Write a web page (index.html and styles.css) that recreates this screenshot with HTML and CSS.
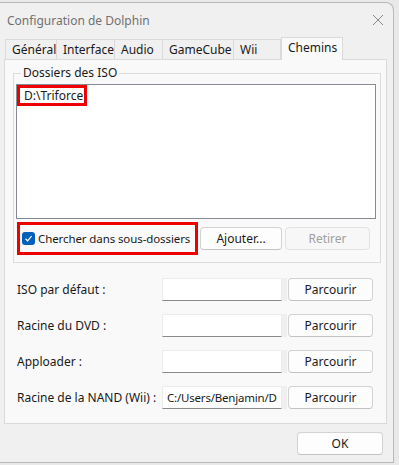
FILE: index.html
```html
<!DOCTYPE html>
<html>
<head>
<title>Configuration de Dolphin</title>
<meta charset="utf-8">
<link rel="stylesheet" href="styles.css">
</head>
<body>
<div class="window">
	<div class="titlebar">
		<span class="title">Configuration de Dolphin</span>
		<svg class="close" width="12" height="12" viewBox="0 0 12 12"><path d="M1 1L11 11M11 1L1 11" stroke="#8a8a8a" stroke-width="1"/></svg>
	</div>
	<div class="tabs">
		<div class="tab t1">Général</div>
		<div class="tab t2">Interface</div>
		<div class="tab t3">Audio</div>
		<div class="tab t4">GameCube</div>
		<div class="tab t5">Wii</div>
		<div class="tab active">Chemins</div>
	</div>
	<div class="panel">
		<fieldset class="group">
			<legend>Dossiers des ISO</legend>
			<div class="listbox">
				<span class="item mark">D:\Triforce</span>
			</div>
			<div class="group-actions">
				<label class="check mark">
					<span class="box"><svg width="9" height="9" viewBox="0 0 9 9"><path d="M1.5 4.8L3.6 6.8L7.6 2.2" stroke="#fff" stroke-width="1.2" fill="none"/></svg></span>
					<span class="check-text">Chercher dans sous-dossiers</span>
				</label>
				<button class="btn add">Ajouter...</button>
				<button class="btn remove" disabled>Retirer</button>
			</div>
		</fieldset>
		<div class="rows">
			<div class="row">
				<span class="lbl">ISO par défaut :</span>
				<div class="edit"></div>
				<button class="btn browse">Parcourir</button>
			</div>
			<div class="row">
				<span class="lbl">Racine du DVD :</span>
				<div class="edit"></div>
				<button class="btn browse">Parcourir</button>
			</div>
			<div class="row">
				<span class="lbl">Apploader :</span>
				<div class="edit"></div>
				<button class="btn browse">Parcourir</button>
			</div>
			<div class="row">
				<span class="lbl">Racine de la NAND (Wii) :</span>
				<div class="edit">C:/Users/Benjamin/D</div>
				<button class="btn browse">Parcourir</button>
			</div>
		</div>
	</div>
	<div class="footer">
		<button class="btn ok">OK</button>
	</div>
</div>
</body>
</html>
```

FILE: styles.css
```css
* {box-sizing: border-box;}

body {
	margin: 0;
	padding-top: 2px;
	background: #e9e9e9;
	font-family: "Noto Sans", "Liberation Sans", sans-serif;
	font-size: 12px;
	color: #1a1a1a;
}

.window {
	width: 394px;
	height: 461px;
	display: flex;
	flex-direction: column;
	background: #f0f0f0;
	border: 1px solid #b9b9b9;
	border-left: none;
	border-radius: 0 8px 0 0;
}

.titlebar {
	height: 34px;
	display: flex;
	align-items: center;
	justify-content: space-between;
	padding: 0 9px 0 7px;
}

.title {
	color: #707070;
	font-size: 12px;
}

/* tabs */
.tabs {
	height: 22px;
	display: flex;
	align-items: flex-end;
	margin-left: 5px;
}

.tab {
	height: 20px;
	line-height: 19px;
	padding-left: 6px;
	border: 1px solid #dadada;
	border-bottom: none;
	margin-right: -1px;
	background: #f0f0f0;
	white-space: nowrap;
}

.t1 {width: 52px;}
.t2 {width: 59px;}
.t3 {width: 49px;}
.t4 {width: 72px;}
.t5 {width: 48px;}

.tab.active {
	width: 62px;
	height: 23px;
	line-height: 20px;
	margin-bottom: -1px;
	margin-left: 1px;
	background: #f9f9f9;
	position: relative;
	z-index: 1;
}

.panel {
	width: 383px;
	height: 365px;
	margin-left: 4px;
	background: #f9f9f9;
	border: 1px solid #dadada;
	padding: 5px 5px 0 8px;
}

/* group box */
.group {
	margin: 0;
	width: 368px;
	height: 198px;
	border: 1px solid #dcdcdc;
	padding: 4px 4px 0 2px;
}

.group legend {
	padding: 0 2px;
	margin-left: 5px;
	line-height: 16px;
}

.listbox {
	height: 135px;
	background: #fff;
	border: 1px solid #868a91;
	padding: 0;
	margin-top: -1px;
}

.item {
	display: inline-block;
	line-height: 14px;
	padding: 1px 1px 0 4px;
}

.mark {
	border: 3px solid #ee0000;
}

.group-actions {
	display: flex;
	align-items: center;
	margin-top: 3px;
}

.check {
	width: 181px;
	height: 33px;
	display: flex;
	align-items: center;
	padding-left: 2px;
	margin-left: 1px;
	white-space: nowrap;
}

.check-text {
	font-size: 11.5px;
	letter-spacing: -0.1px;
}

.box {
	flex: none;
	width: 13px;
	height: 13px;
	border-radius: 3px;
	background: #005fb8;
	display: flex;
	align-items: center;
	justify-content: center;
	margin-right: 3px;
}

.btn {
	font-family: inherit;
	font-size: 12px;
	color: #1a1a1a;
	background: #fdfdfd;
	border: 1px solid #d3d3d3;
	border-bottom-color: #c2c2c2;
	border-radius: 4px;
	height: 23px;
	padding: 0;
}

.add {
	width: 82px;
	margin-left: 2px;
}

.remove {
	width: 85px;
	margin-left: 3px;
	background: #f7f7f7;
	color: #a0a0a0;
	border-color: #e2e2e2;
}

/* path rows */
.rows {
	display: flex;
	flex-direction: column;
	gap: 13px;
	margin-top: 15px;
	padding-left: 4px;
}

.row {
	display: flex;
	align-items: center;
	height: 23px;
}

.lbl {
	width: 145px;
	white-space: nowrap;
}

.edit {
	width: 120px;
	height: 23px;
	background: #fff;
	border: 1px solid #ececec;
	border-bottom-color: #8a8a8a;
	box-shadow: 5px 0 0 #efefef;
	padding: 3px 0 0 4px;
	font-size: 11.5px;
	letter-spacing: -0.2px;
	line-height: 15px;
	overflow: hidden;
	white-space: nowrap;
}

.browse {
	width: 85px;
	margin-left: 6px;
}

.footer {
	flex: 1;
	display: flex;
	justify-content: flex-end;
	padding: 8px 10px 0 0;
}

.ok {
	width: 86px;
	height: 23px;
}
```
